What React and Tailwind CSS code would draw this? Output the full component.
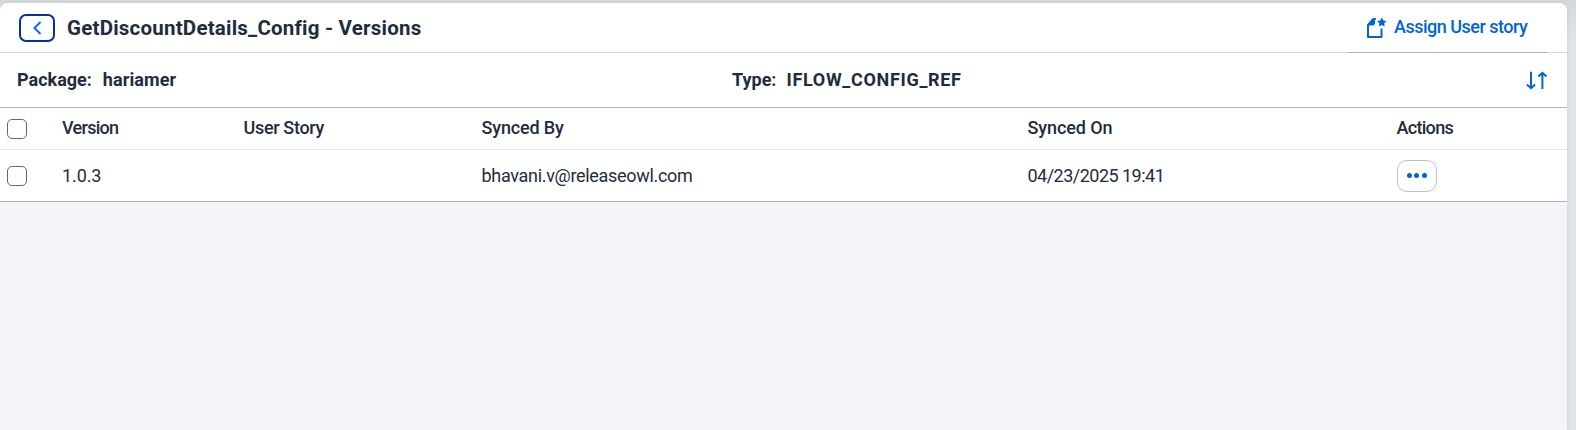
const columns = "grid grid-cols-[62px_181.5px_238px_546px_369px_1fr] items-center";

function Checkbox() {
  return <span className="ml-[7px] block size-5 rounded-[5px] border border-[#556b82] bg-white" />;
}

function AssignIcon() {
  return (
    <svg className="shrink-0" width="21" height="22" viewBox="0 0 21 22" fill="none">
      <path d="M2 8V20H15.5V11.5" stroke="#0064d9" strokeWidth="2" strokeLinejoin="round" />
      <path d="M1 8.3Q1 7.4 1.7 6.7L6.3 1.6Q7 .9 8 .9H10V2.8H9V5.4Q9 8.6 6 8.6H3V10H1Z" fill="#0064d9" />
      <path d="m15.8 .5 1.5 2.9 3.3.5-2.4 2.3.5 3.3-2.9-1.6-2.9 1.6.5-3.3L11 3.9l3.3-.5Z" fill="#0064d9" />
    </svg>
  );
}

function SortIcon() {
  return (
    <svg width="22" height="19" viewBox="0 0 22 19" fill="none" stroke="#0064d9" strokeWidth="2">
      <path d="M5 .8V17.2M.9 13.4 5 17.2 9.1 13.4M16.4 18V1.8M12.3 5.6 16.4 1.8 20.5 5.6" />
    </svg>
  );
}

export default function App() {
  return (
    <div className="h-[430px] overflow-hidden bg-gradient-to-b from-[#d3d8dc] to-[#e1e5e8] to-10% pt-[3px] font-[Roboto,sans-serif] text-lg leading-6 text-[#1d2d3e]">
      <main className="h-[427px] w-[1567px] overflow-hidden rounded-t-lg bg-[#f4f5f8] shadow-[0_0_4px_#c3c9cf]">
        <header className="flex h-[50px] items-stretch justify-between border-b border-[#d9d9d9] bg-white">
          <div className="flex items-center pl-[19px]">
            <button className="flex h-7 w-9 items-center justify-center rounded-[7px] border-2 border-[#0032a5]">
              <svg width="10" height="14" viewBox="0 0 10 14" fill="none" stroke="#0070f2" strokeWidth="2">
                <path d="M8.5 1 2.5 7 8.5 13" />
              </svg>
            </button>
            <h1 className="ml-3 text-[20.5px] font-bold tracking-[0.22px]">GetDiscountDetails_Config - Versions</h1>
          </div>
          <button className="-mb-px mr-5 flex h-[50px] w-[200px] items-center border-b border-[#a8b3bd] pl-[19px] font-medium text-[#0064d9]">
            <AssignIcon />
            <span className="ml-[7px] pb-[2px] tracking-[-0.5px]">Assign User story</span>
          </button>
        </header>
        <section className="flex h-[55px] items-center border-b border-[#a8b3bd] bg-white pl-[17px] pr-[19px] font-bold">
          <div className="flex w-[715px] gap-[11px]">
            <span>Package:</span>
            <span className="tracking-[0.1px]">hariamer</span>
          </div>
          <div className="flex gap-[10px]">
            <span>Type:</span>
            <span className="tracking-[0.68px]">IFLOW_CONFIG_REF</span>
          </div>
          <button className="ml-auto"><SortIcon /></button>
        </section>
        <div className={columns + " h-[42px] border-b border-[#e5e5e5] bg-white font-medium"}>
          <Checkbox />
          <span className="pb-[2px] tracking-[-0.7px]">Version</span>
          <span className="pb-[2px] tracking-[-0.33px]">User Story</span>
          <span className="pb-[2px] tracking-[-0.15px]">Synced By</span>
          <span className="pb-[2px] tracking-[-0.1px]">Synced On</span>
          <span className="pb-[2px] tracking-[-0.7px]">Actions</span>
        </div>
        <div className={columns + " h-[52px] border-b border-[#a8b3bd] bg-white"}>
          <Checkbox />
          <span className="tracking-[-0.1px]">1.0.3</span>
          <span />
          <span className="tracking-[-0.31px]">bhavani.v@releaseowl.com</span>
          <span className="tracking-[-0.52px]">04/23/2025 19:41</span>
          <button className="flex h-8 w-10 items-center justify-center gap-[2.5px] rounded-[10px] border border-[#bcc3ca]">
            <i className="size-[5px] rounded-full bg-[#0064d9]" />
            <i className="size-[5px] rounded-full bg-[#0064d9]" />
            <i className="size-[5px] rounded-full bg-[#0064d9]" />
          </button>
        </div>
      </main>
    </div>
  );
}
